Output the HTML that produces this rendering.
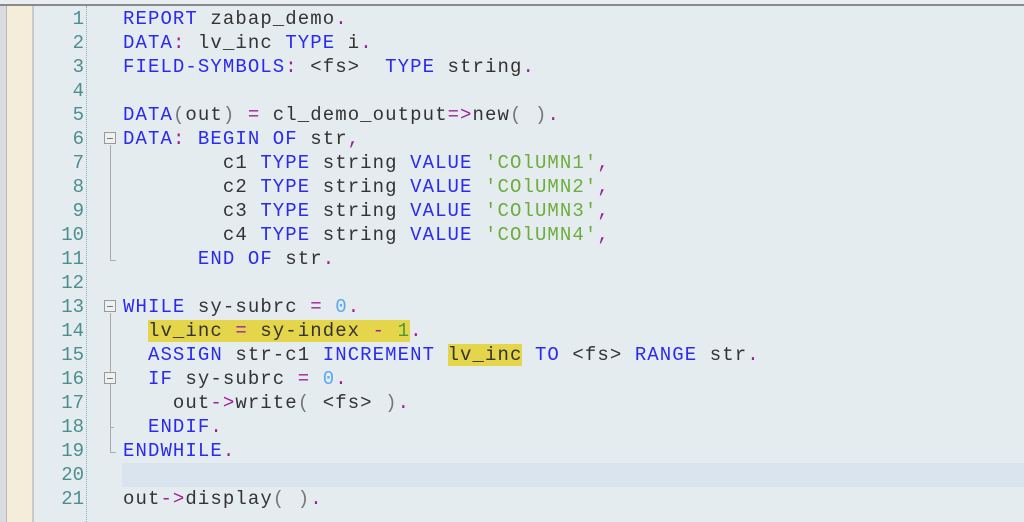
<!DOCTYPE html>
<html><head><meta charset="utf-8"><style>
html,body{margin:0;padding:0;width:1024px;height:522px;overflow:hidden;background:#e5ecef;}
.top{position:absolute;left:0;top:0;width:1024px;height:4px;background:#e8edf2;border-bottom:2px solid #8a8a8a;}
.lstrip{position:absolute;left:0;top:6px;width:6px;height:516px;background:#d8dcdf;border-right:1px solid #b8b8b8;}
.beige{position:absolute;left:7px;top:6px;width:25px;height:516px;background:#f5ecda;border-right:2px solid #c9c9c9;}
.dots{position:absolute;left:86px;top:6px;height:516px;border-left:1px dotted #7fb3b3;}
.hl20{position:absolute;left:122px;top:463px;width:902px;height:24px;background:#d9e4ef;}
.row{position:absolute;left:0;height:24px;line-height:24px;font-family:"Liberation Mono","Courier New",monospace;font-size:19px;letter-spacing:1.08px;white-space:pre;color:#333;}
.num{position:absolute;left:24px;width:60px;text-align:right;color:#4b8f90;font-family:"Liberation Mono",monospace;font-size:19px;letter-spacing:0;line-height:24px;height:24px;}
.code{position:absolute;left:123px;}
.k{color:#2a2af0}.o{color:#a0209a}.n{color:#5aa6f5}.s{color:#6cad3e}.p{color:#777}
.y{background:#e4d54a}
.fold{position:absolute;left:104px;width:10px;height:10px;border:1px solid #9a9a9a;background:#eef1f2;}
.fold:after{content:"";position:absolute;left:2px;top:5px;width:6px;height:1px;background:#777;}
.vl{position:absolute;left:110px;width:1px;background:#aaa;}
.hl{position:absolute;left:110px;width:6px;height:1px;background:#aaa;}
</style></head><body>
<div class="top"></div><div class="lstrip"></div><div class="beige"></div><div class="dots"></div>
<div class="hl20"></div>

<div class="row" style="top:7px"><span class="num">1</span><span class="code"><span class="k">REPORT</span> zabap_demo<span class="o">.</span></span></div>
<div class="row" style="top:31px"><span class="num">2</span><span class="code"><span class="k">DATA</span><span class="o">:</span> lv_inc <span class="k">TYPE</span> i<span class="o">.</span></span></div>
<div class="row" style="top:55px"><span class="num">3</span><span class="code"><span class="k">FIELD-SYMBOLS</span><span class="o">:</span> &lt;fs&gt;  <span class="k">TYPE</span> string<span class="o">.</span></span></div>
<div class="row" style="top:79px"><span class="num">4</span></div>
<div class="row" style="top:103px"><span class="num">5</span><span class="code"><span class="k">DATA</span><span class="p">(</span>out<span class="p">)</span> <span class="o">=</span> cl_demo_output<span class="o">=&gt;</span>new<span class="p">(</span> <span class="p">)</span><span class="o">.</span></span></div>
<div class="row" style="top:127px"><span class="num">6</span><span class="code"><span class="k">DATA</span><span class="o">:</span> <span class="k">BEGIN OF</span> str<span class="o">,</span></span></div>
<div class="row" style="top:151px"><span class="num">7</span><span class="code">        c1 <span class="k">TYPE</span> string <span class="k">VALUE</span> <span class="s">'COlUMN1'</span><span class="o">,</span></span></div>
<div class="row" style="top:175px"><span class="num">8</span><span class="code">        c2 <span class="k">TYPE</span> string <span class="k">VALUE</span> <span class="s">'COlUMN2'</span><span class="o">,</span></span></div>
<div class="row" style="top:199px"><span class="num">9</span><span class="code">        c3 <span class="k">TYPE</span> string <span class="k">VALUE</span> <span class="s">'COlUMN3'</span><span class="o">,</span></span></div>
<div class="row" style="top:223px"><span class="num">10</span><span class="code">        c4 <span class="k">TYPE</span> string <span class="k">VALUE</span> <span class="s">'COlUMN4'</span><span class="o">,</span></span></div>
<div class="row" style="top:247px"><span class="num">11</span><span class="code">      <span class="k">END OF</span> str<span class="o">.</span></span></div>
<div class="row" style="top:271px"><span class="num">12</span></div>
<div class="row" style="top:295px"><span class="num">13</span><span class="code"><span class="k">WHILE</span> sy-subrc <span class="o">=</span> <span class="n">0</span><span class="o">.</span></span></div>
<div class="row" style="top:319px"><span class="num">14</span><span class="code">  <span class="y">lv_inc <span class="o">=</span> sy-index <span class="o">-</span> <span class="n" style="color:#4a9a3a">1</span></span><span class="o">.</span></span></div>
<div class="row" style="top:343px"><span class="num">15</span><span class="code">  <span class="k">ASSIGN</span> str-c1 <span class="k">INCREMENT</span> <span class="y">lv_inc</span> <span class="k">TO</span> &lt;fs&gt; <span class="k">RANGE</span> str<span class="o">.</span></span></div>
<div class="row" style="top:367px"><span class="num">16</span><span class="code">  <span class="k">IF</span> sy-subrc <span class="o">=</span> <span class="n">0</span><span class="o">.</span></span></div>
<div class="row" style="top:391px"><span class="num">17</span><span class="code">    out<span class="o">-&gt;</span>write<span class="p">(</span> &lt;fs&gt; <span class="p">)</span><span class="o">.</span></span></div>
<div class="row" style="top:415px"><span class="num">18</span><span class="code">  <span class="k">ENDIF</span><span class="o">.</span></span></div>
<div class="row" style="top:439px"><span class="num">19</span><span class="code"><span class="k">ENDWHILE</span><span class="o">.</span></span></div>
<div class="row" style="top:463px"><span class="num">20</span></div>
<div class="row" style="top:487px"><span class="num">21</span><span class="code">out<span class="o">-&gt;</span>display<span class="p">(</span> <span class="p">)</span><span class="o">.</span></span></div>

<div class="fold" style="top:132px"></div>
<div class="vl" style="top:145px;height:115px"></div><div class="hl" style="top:260px"></div>
<div class="fold" style="top:300px"></div>
<div class="vl" style="top:313px;height:139px"></div><div class="hl" style="top:452px"></div>
<div class="fold" style="top:372px"></div>
<div class="hl" style="top:427px;width:4px"></div>
</body></html>
